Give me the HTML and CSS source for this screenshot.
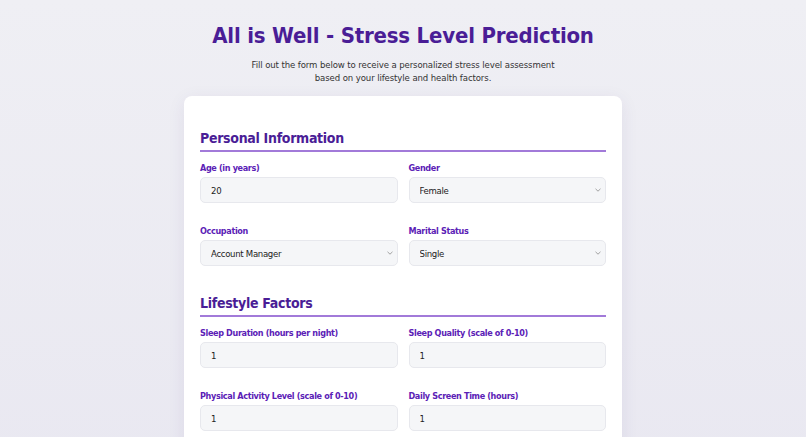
FILE: index.html
```html
<!DOCTYPE html>
<html lang="en">

<head>
    <meta charset="UTF-8">
    <meta name="viewport" content="width=device-width, initial-scale=1.0">
    <title>All is Well - Stress Level Prediction</title>
    <link rel="stylesheet" href="styles.css">
</head>

<body>
    <header class="intro">
        <h1>All is Well - Stress Level Prediction</h1>
        <p>Fill out the form below to receive a personalized stress level assessment<br>
            based on your lifestyle and health factors.</p>
    </header>

    <form class="card" id="stress-form">
        <!-- Personal section -->
        <h2 class="section-title">Personal Information</h2>
        <div class="form-grid">
            <div class="form-group">
                <label for="age">Age (in years)</label>
                <input type="number" id="age" name="age" value="20">
            </div>
            <div class="form-group">
                <label for="gender">Gender</label>
                <select id="gender" name="gender">
                    <option>Female</option>
                    <option>Male</option>
                </select>
            </div>
            <div class="form-group">
                <label for="occupation">Occupation</label>
                <select id="occupation" name="occupation">
                    <option>Account Manager</option>
                    <option>Software Engineer</option>
                    <option>Teacher</option>
                </select>
            </div>
            <div class="form-group">
                <label for="marital">Marital Status</label>
                <select id="marital" name="marital">
                    <option>Single</option>
                    <option>Married</option>
                </select>
            </div>
        </div>

        <!-- Lifestyle section -->
        <h2 class="section-title">Lifestyle Factors</h2>
        <div class="form-grid">
            <div class="form-group">
                <label for="sleep-duration">Sleep Duration (hours per night)</label>
                <input type="number" id="sleep-duration" name="sleep_duration" value="1">
            </div>
            <div class="form-group">
                <label for="sleep-quality">Sleep Quality (scale of 0-10)</label>
                <input type="number" id="sleep-quality" name="sleep_quality" value="1">
            </div>
            <div class="form-group">
                <label for="activity">Physical Activity Level (scale of 0-10)</label>
                <input type="number" id="activity" name="activity" value="1">
            </div>
            <div class="form-group">
                <label for="screen-time">Daily Screen Time (hours)</label>
                <input type="number" id="screen-time" name="screen_time" value="1">
            </div>
        </div>
    </form>
</body>

</html>
```

FILE: styles.css
```css
body {
    font-family: "DejaVu Sans Condensed", "DejaVu Sans", Verdana, sans-serif;
    background: linear-gradient(180deg, #efeff4 0%, #e9e8f1 100%);
    margin: 0;
    padding: 0;
    min-height: 100vh;
    color: #333;
}

.intro {
    text-align: center;
    padding-top: 20px;
}

.intro h1 {
    margin: 0;
    font-size: 22px;
    line-height: 32px;
    letter-spacing: -0.2px;
    color: #4a1d96;
}

.intro p {
    margin: 6px 0 0;
    font-size: 9.5px;
    line-height: 13px;
    letter-spacing: -0.1px;
    color: #333;
}

.card {
    width: 406px;
    margin: 12px auto 0;
    padding: 32px 16px 16px;
    background: #fff;
    border-radius: 8px;
    box-shadow: 0 4px 18px rgba(60, 40, 110, 0.08);
}

.section-title {
    margin: 0 0 10px;
    padding-bottom: 2px;
    font-size: 14px;
    line-height: 20px;
    letter-spacing: -0.3px;
    color: #4a1d96;
    border-bottom: 2px solid #a27ad9;
}

.form-grid {
    display: grid;
    grid-template-columns: 1fr 1fr;
    column-gap: 11px;
    row-gap: 22px;
    margin-bottom: 27px;
}

.form-group label {
    display: block;
    margin-bottom: 3px;
    font-size: 9px;
    line-height: 12px;
    letter-spacing: -0.35px;
    font-weight: bold;
    color: #5b21b6;
}

input,
select {
    display: block;
    width: 100%;
    height: 26px;
    box-sizing: border-box;
    padding: 0 10px;
    font-family: inherit;
    font-size: 9.5px;
    letter-spacing: -0.3px;
    color: #222;
    background: #f5f6f8;
    border: 1px solid #e7e8ed;
    border-radius: 5px;
    outline: none;
}

input[type="number"] {
    -moz-appearance: textfield;
}

input::-webkit-inner-spin-button,
input::-webkit-outer-spin-button {
    -webkit-appearance: none;
    margin: 0;
}

select {
    -webkit-appearance: none;
    appearance: none;
    background-image: url("data:image/svg+xml,%3Csvg xmlns='http://www.w3.org/2000/svg' width='6' height='4' viewBox='0 0 6 4'%3E%3Cpath d='M0.5 0.8l2.5 2.4 2.5-2.4' fill='none' stroke='%23999' stroke-width='0.9'/%3E%3C/svg%3E");
    background-repeat: no-repeat;
    background-position: right 4px center;
}
```
